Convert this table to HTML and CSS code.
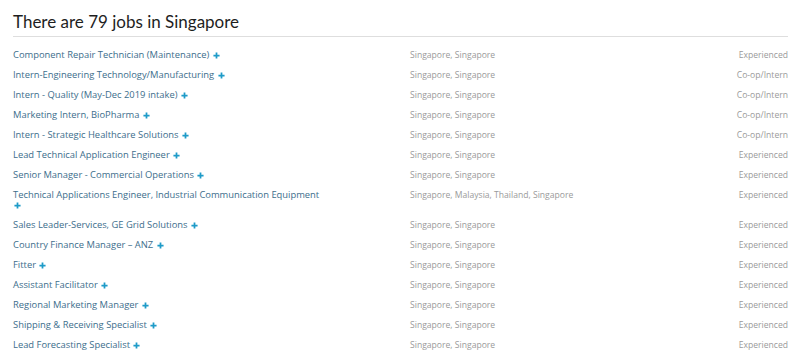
FILE: index.html
```html
<!DOCTYPE html>
<html>
<head>
<meta charset="utf-8">
<link rel="stylesheet" href="styles.css">
</head>
<body>
<div class="page">
  <h1 class="title">There are 79 jobs in Singapore</h1>
  <div class="jobs">
    <div class="row"><div class="job"><a>Component Repair Technician (Maintenance)</a> <svg class="plus" viewBox="0 0 8 8"><path d="M4 0.5V7.5M0.5 4H7.5"/></svg></div><div class="loc">Singapore, Singapore</div><div class="type">Experienced</div></div>
    <div class="row"><div class="job"><a>Intern-Engineering Technology/Manufacturing</a> <svg class="plus" viewBox="0 0 8 8"><path d="M4 0.5V7.5M0.5 4H7.5"/></svg></div><div class="loc">Singapore, Singapore</div><div class="type">Co-op/Intern</div></div>
    <div class="row"><div class="job"><a>Intern - Quality (May-Dec 2019 intake)</a> <svg class="plus" viewBox="0 0 8 8"><path d="M4 0.5V7.5M0.5 4H7.5"/></svg></div><div class="loc">Singapore, Singapore</div><div class="type">Co-op/Intern</div></div>
    <div class="row"><div class="job"><a>Marketing Intern, BioPharma</a> <svg class="plus" viewBox="0 0 8 8"><path d="M4 0.5V7.5M0.5 4H7.5"/></svg></div><div class="loc">Singapore, Singapore</div><div class="type">Co-op/Intern</div></div>
    <div class="row"><div class="job"><a>Intern - Strategic Healthcare Solutions</a> <svg class="plus" viewBox="0 0 8 8"><path d="M4 0.5V7.5M0.5 4H7.5"/></svg></div><div class="loc">Singapore, Singapore</div><div class="type">Co-op/Intern</div></div>
    <div class="row"><div class="job"><a>Lead Technical Application Engineer</a> <svg class="plus" viewBox="0 0 8 8"><path d="M4 0.5V7.5M0.5 4H7.5"/></svg></div><div class="loc">Singapore, Singapore</div><div class="type">Experienced</div></div>
    <div class="row"><div class="job"><a>Senior Manager - Commercial Operations</a> <svg class="plus" viewBox="0 0 8 8"><path d="M4 0.5V7.5M0.5 4H7.5"/></svg></div><div class="loc">Singapore, Singapore</div><div class="type">Experienced</div></div>
    <div class="row"><div class="job"><a>Technical Applications Engineer, Industrial Communication Equipment</a> <svg class="plus" viewBox="0 0 8 8"><path d="M4 0.5V7.5M0.5 4H7.5"/></svg></div><div class="loc">Singapore, Malaysia, Thailand, Singapore</div><div class="type">Experienced</div></div>
    <div class="row"><div class="job"><a>Sales Leader-Services, GE Grid Solutions</a> <svg class="plus" viewBox="0 0 8 8"><path d="M4 0.5V7.5M0.5 4H7.5"/></svg></div><div class="loc">Singapore, Singapore</div><div class="type">Experienced</div></div>
    <div class="row"><div class="job"><a>Country Finance Manager – ANZ</a> <svg class="plus" viewBox="0 0 8 8"><path d="M4 0.5V7.5M0.5 4H7.5"/></svg></div><div class="loc">Singapore, Singapore</div><div class="type">Experienced</div></div>
    <div class="row"><div class="job"><a>Fitter</a> <svg class="plus" viewBox="0 0 8 8"><path d="M4 0.5V7.5M0.5 4H7.5"/></svg></div><div class="loc">Singapore, Singapore</div><div class="type">Experienced</div></div>
    <div class="row"><div class="job"><a>Assistant Facilitator</a> <svg class="plus" viewBox="0 0 8 8"><path d="M4 0.5V7.5M0.5 4H7.5"/></svg></div><div class="loc">Singapore, Singapore</div><div class="type">Experienced</div></div>
    <div class="row"><div class="job"><a>Regional Marketing Manager</a> <svg class="plus" viewBox="0 0 8 8"><path d="M4 0.5V7.5M0.5 4H7.5"/></svg></div><div class="loc">Singapore, Singapore</div><div class="type">Experienced</div></div>
    <div class="row"><div class="job"><a>Shipping &amp; Receiving Specialist</a> <svg class="plus" viewBox="0 0 8 8"><path d="M4 0.5V7.5M0.5 4H7.5"/></svg></div><div class="loc">Singapore, Singapore</div><div class="type">Experienced</div></div>
    <div class="row"><div class="job"><a>Lead Forecasting Specialist</a> <svg class="plus" viewBox="0 0 8 8"><path d="M4 0.5V7.5M0.5 4H7.5"/></svg></div><div class="loc">Singapore, Singapore</div><div class="type">Experienced</div></div>
  </div>
</div>
</body>
</html>
```
FILE: styles.css
```css
html, body {
  margin: 0;
  padding: 0;
  background: #ffffff;
  overflow: hidden;
}
.page {
  padding: 10px 12px 0 13px;
  font-family: "Open Sans", "Liberation Sans", sans-serif;
}
.title {
  margin: 0;
  font-family: "Lato", "Open Sans", sans-serif;
  font-size: 17px;
  font-weight: 400;
  color: #1e1e1e;
  line-height: 24px;
  padding-bottom: 2px;
  border-bottom: 1px solid #dedede;
}
.jobs {
  padding-top: 8px;
}
.row {
  display: grid;
  grid-template-columns: 397px 1fr 120px;
  padding: 5px 0;
  font-size: 9.4px;
  line-height: 10px;
}
.job {
  color: #3d6e8c;
  padding-right: 86px;
}
.plus {
  width: 7px;
  height: 7px;
  vertical-align: -0.5px;
  margin-left: 1px;
}
.plus path {
  stroke: #1e9bc8;
  stroke-width: 2;
  fill: none;
}
.loc,
.type {
  color: #9a9a9a;
  font-size: 8.6px;
}
.type {
  text-align: right;
}
```
